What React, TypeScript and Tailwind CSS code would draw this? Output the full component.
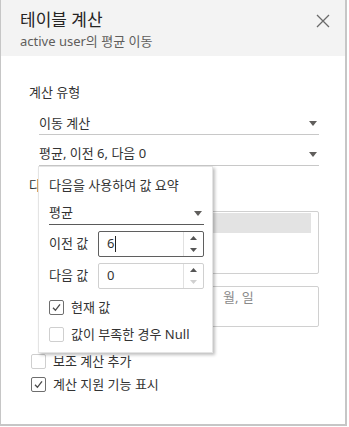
import React from 'react';

const font = { fontFamily: '"Noto Sans", "Noto Sans CJK KR", sans-serif' };

function Caret({ className = '' }: { className?: string }) {
    return (
        <svg width="8" height="5" viewBox="0 0 8 5" className={className}>
            <path d="M0 0 L8 0 L4 5 Z" fill="#605e5c" />
        </svg>
    );
}

function Check({ checked, label, className = '' }: { checked: boolean; label: string; className?: string }) {
    return (
        <div className={'flex items-center gap-[7px] ' + className}>
            <div
                className={
                    'flex h-[15px] w-[15px] items-center justify-center rounded-[2px] border bg-white ' +
                    (checked ? 'border-[#6e6e6e]' : 'border-[#cfcfcf]')
                }
            >
                {checked && (
                    <svg width="11" height="11" viewBox="0 0 11 11">
                        <path d="M2 5.8 L4.4 8.3 L9 2.3" fill="none" stroke="#4a4a4a" strokeWidth="1.3" />
                    </svg>
                )}
            </div>
            <span className="text-[13px] text-[#333]">{label}</span>
        </div>
    );
}

function NumberInput({ value, focused }: { value: string; focused?: boolean }) {
    return (
        <div
            className={
                'flex h-[26px] w-[106px] rounded-[2px] border bg-white ' +
                (focused ? 'border-[#5f5f5f]' : 'border-[#d0d0d0]')
            }
        >
            <div className="flex flex-1 items-center pl-[8px] text-[13px] text-[#333]">
                {value}
                {focused && <span className="ml-[1px] h-[16px] w-px bg-[#222]" />}
            </div>
            <div className="flex w-[20px] flex-col border-l border-[#e1e1e1]">
                <div className="flex flex-1 items-center justify-center">
                    <svg width="7" height="4" viewBox="0 0 7 4"><path d="M0 4 L7 4 L3.5 0 Z" fill="#555" /></svg>
                </div>
                <div className="flex flex-1 items-center justify-center">
                    <svg width="7" height="4" viewBox="0 0 7 4">
                        <path d="M0 0 L7 0 L3.5 4 Z" fill={focused ? '#555' : '#d0d0d0'} />
                    </svg>
                </div>
            </div>
        </div>
    );
}

export default function App() {
    return (
        <div className="h-[427px] w-[349px] bg-white" style={font}>
            <div className="relative flex h-[426px] w-[347px] flex-col border-l border-r-[2px] border-b-[2px] border-[#c6c6c6] bg-white">
                {/* header */}
                <div className="flex h-[56px] justify-between bg-[#f3f3f3] pl-[19px] pr-[15px]">
                    <div className="pt-[8px]">
                        <div className="text-[17px] leading-[24px] text-[#252423]">테이블 계산</div>
                        <div className="text-[13px] leading-[18px] text-[#605e5c]">active user의 평균 이동</div>
                    </div>
                    <svg width="14" height="14" viewBox="0 0 14 14" className="mt-[14px]">
                        <path d="M1 1 L13 13 M13 1 L1 13" stroke="#6a6a6a" strokeWidth="1.3" />
                    </svg>
                </div>

                {/* body */}
                <div className="flex flex-col pl-[28px] pr-[26px] pt-[27px]">
                    <div className="text-[13px] leading-[18px] text-[#333]">계산 유형</div>
                    <div className="ml-[10px] mt-[12px] flex h-[22px] items-center justify-between border-b border-[#c8c8c8] pr-[2px]">
                        <span className="text-[13px] text-[#333]">이동 계산</span>
                        <Caret />
                    </div>
                    <div className="ml-[10px] mt-[8px] flex h-[23px] items-center justify-between border-b border-[#c8c8c8] pr-[2px]">
                        <span className="text-[13px] text-[#333]">평균, 이전 6, 다음 0</span>
                        <Caret />
                    </div>
                    <div className="mt-[10px] text-[13px] leading-[18px] text-[#333]">다</div>
                    <div className="ml-[10px] mt-[17px] h-[63px] rounded-[2px] border border-[#d0d0d0] p-px">
                        <div className="mr-[6px] h-[20px] bg-[#e3e3e3]" />
                    </div>
                    <div className="ml-[10px] mt-[12px] h-[41px] rounded-[2px] border border-[#d0d0d0] pl-[12px] pt-[1px] text-[13px] text-[#8a8a8a]">
                        <span className="ml-[171px]">월, 일</span>
                    </div>
                    <Check checked={false} label="보조 계산 추가" className="ml-[2px] mt-[25px]" />
                    <Check checked label="계산 지원 기능 표시" className="ml-[2px] mt-[3px]" />
                </div>

                {/* popup */}
                <div className="absolute left-[37px] top-[166px] flex h-[187px] w-[175px] flex-col border border-[#e4e4e4] bg-white pl-[10px] pr-[8px] pt-[9px] shadow-[2px_2px_3px_rgba(0,0,0,0.25)]">
                    <div className="text-[13px] leading-[18px] text-[#333]">다음을 사용하여 값 요약</div>
                    <div className="mt-[8px] flex h-[23px] items-center justify-between border-b border-[#5a5a5a] pr-[2px]">
                        <span className="text-[13px] text-[#333]">평균</span>
                        <Caret />
                    </div>
                    <div className="mt-[6px] flex items-center justify-between">
                        <span className="text-[13px] text-[#333]">이전 값</span>
                        <NumberInput value="6" focused />
                    </div>
                    <div className="mt-[6px] flex items-center justify-between">
                        <span className="text-[13px] text-[#333]">다음 값</span>
                        <NumberInput value="0" />
                    </div>
                    <Check checked label="현재 값" className="mt-[9px]" />
                    <Check checked={false} label="값이 부족한 경우 Null" className="mt-[7px]" />
                </div>
            </div>
        </div>
    );
}
